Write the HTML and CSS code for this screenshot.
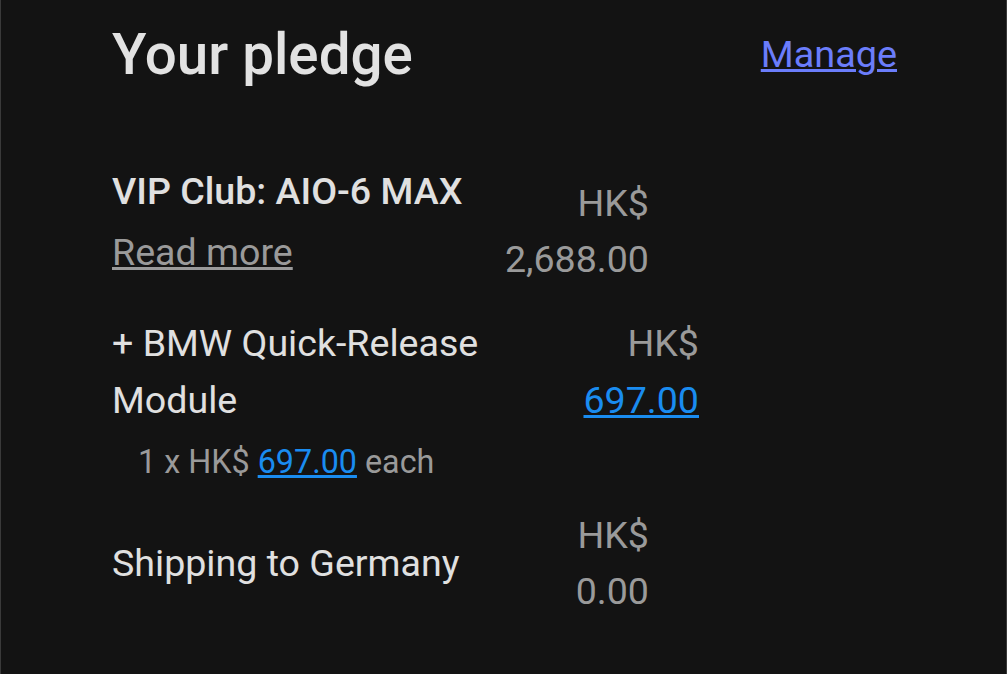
FILE: index.html
```html
<!DOCTYPE html>
<html lang="en">
<head>
<meta charset="utf-8">
<title>Your pledge</title>
<link rel="stylesheet" href="styles.css">
</head>
<body>
<main class="panel">
  <header class="panel-header">
    <h1 class="panel-title">Your pledge</h1>
    <a class="manage-link" href="#">Manage</a>
  </header>

  <section class="line line--reward">
    <div class="line-label">
      <div class="reward-name">VIP Club: AIO-6 MAX</div>
      <a class="read-more" href="#">Read more</a>
    </div>
    <div class="line-price line-price--reward">
      <span class="currency">HK$</span>
      <span class="amount">2,688.00</span>
    </div>
  </section>

  <section class="line line--addon">
    <div class="line-label">+ BMW Quick-Release Module</div>
    <div class="line-price line-price--addon">
      <span class="currency">HK$</span>
      <a class="amount amount-link" href="#">697.00</a>
    </div>
  </section>
  <p class="addon-qty">1 x HK$ <a class="amount-link" href="#">697.00</a> each</p>

  <section class="line line--shipping">
    <div class="line-label">Shipping to Germany</div>
    <div class="line-price line-price--shipping">
      <span class="currency">HK$</span>
      <span class="amount">0.00</span>
    </div>
  </section>
</main>
</body>
</html>
```

FILE: styles.css
```css
html, body {
  margin: 0;
  padding: 0;
  background: #131313;
}

body {
  font-family: Roboto, "Liberation Sans", Arial, sans-serif;
  color: #e0e0e0;
}

.panel {
  box-sizing: border-box;
  min-height: 100vh;
  border-left: 1px solid #3a3a3a;
  border-right: 1px solid #3a3a3a;
  padding: 22px 109px 0 111px;
}

.panel-header {
  display: flex;
  justify-content: space-between;
  align-items: center;
}

.panel-title {
  margin: 0;
  font-size: 56.5px;
  line-height: 66px;
  font-weight: 500;
  color: #e2e2e2;
  letter-spacing: 0;
}

.manage-link {
  margin-bottom: 2px;
  font-size: 37.8px;
  line-height: 56px;
  color: #6b7dfb;
  text-decoration: underline;
  text-decoration-thickness: 3px;
}

.line {
  display: flex;
  font-size: 37.6px;
  line-height: 56px;
}

.line--reward {
  margin-top: 75px;
  align-items: flex-start;
}

.line--addon {
  margin-top: 28px;
  align-items: flex-start;
  line-height: 57px;
}

.line--shipping {
  margin-top: 24px;
  align-items: center;
}

.line-label {
  width: 391px;
  flex: none;
  color: #e0e0e0;
}

.reward-name {
  font-weight: 500;
}

.read-more {
  display: block;
  margin-top: 5px;
  color: #9a9a9a;
  text-decoration: underline;
  text-decoration-thickness: 3px;
  width: max-content;
}

.line-price {
  display: flex;
  flex-direction: column;
  align-items: flex-end;
  color: #9a9a9a;
  flex: none;
}

.line-price--reward {
  width: 146px;
  padding-top: 12px;
}

.line-price--addon {
  width: 196px;
}

.line-price--shipping {
  width: 146px;
}

.amount-link {
  color: #1a8cf0;
  text-decoration: underline;
  text-decoration-thickness: 3px;
}

.addon-qty {
  margin: 12px 0 0;
  padding-left: 26px;
  font-size: 32.3px;
  line-height: 42px;
  color: #9a9a9a;
}
```
